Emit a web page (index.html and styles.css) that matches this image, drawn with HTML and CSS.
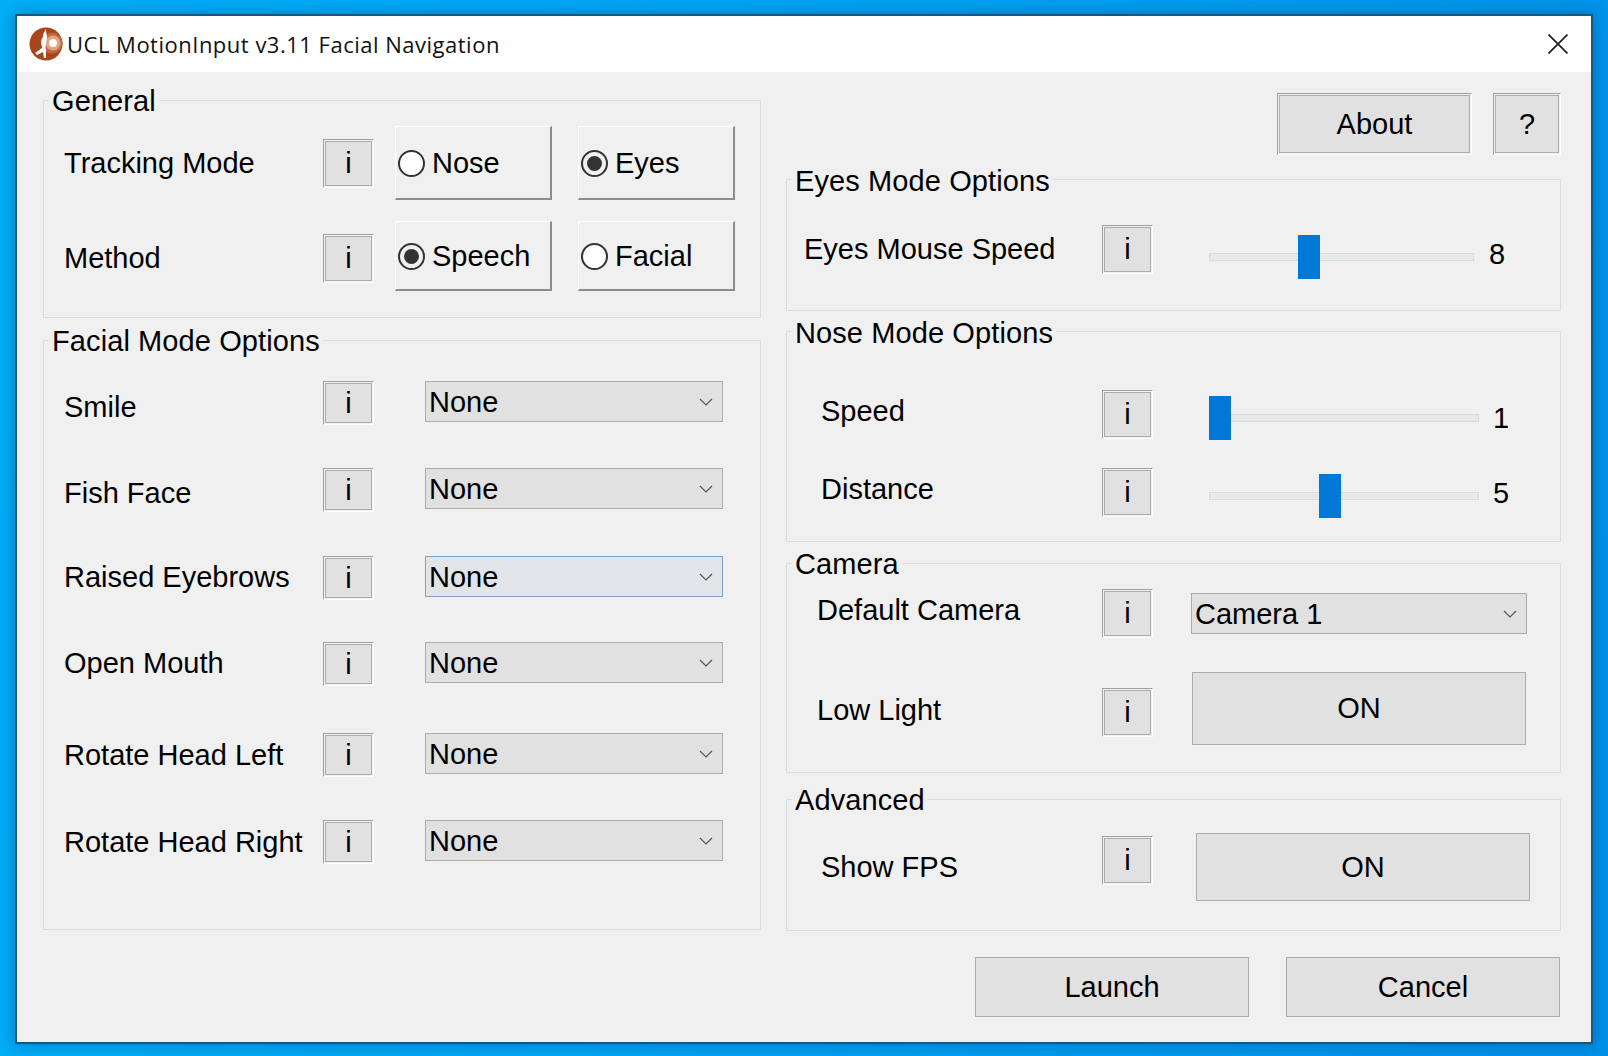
FILE: index.html
```html
<!DOCTYPE html>
<html lang="en">
<head>
    <meta charset="UTF-8">
    <title>UCL MotionInput v3.11 Facial Navigation</title>
    <link rel="stylesheet" href="styles.css">
</head>
<body>
    <div class="window">
        <div class="titlebar">
            <svg class="logo" width="34" height="34" viewBox="0 0 34 34">
                <circle cx="17" cy="17" r="16.5" fill="#a8451c"/>
                <circle cx="23" cy="16" r="10.5" fill="#c0683d"/>
                <circle cx="24" cy="16" r="7.5" fill="#e0a483"/>
                <circle cx="24" cy="16" r="4" fill="#fff"/>
                <path d="M17 2c-1 2-3 4-3 7 0 2-2 3-2 6 0 2 1 4 1 6l-7 5 2 2 6-3 1 6 2 0 0-8c-1-3 0-5 0-7s1-3 1-5-1-6-1-9z" fill="#fff"/>
            </svg>
            <span class="title">UCL MotionInput v3.11 Facial Navigation</span>
            <svg class="close" width="20" height="20" viewBox="0 0 20 20">
                <path d="M0.5 0.5L19.5 19.5M19.5 0.5L0.5 19.5" stroke="#1c1c1c" stroke-width="1.6" fill="none"/>
            </svg>
        </div>

        <div class="content">
            <div class="columns">
                <div class="left">
                    <fieldset class="group general">
                        <legend>General</legend>
                        <div class="general-grid">
                            <span class="label">Tracking Mode</span>
                            <button class="relief info info-tall">i</button>
                            <label class="tile">
                                <span class="radio"></span>Nose
                            </label>
                            <label class="tile">
                                <span class="radio checked"></span>Eyes
                            </label>

                            <span class="label shift-2">Method</span>
                            <button class="relief info info-tall shift-2">i</button>
                            <label class="tile">
                                <span class="radio checked"></span>Speech
                            </label>
                            <label class="tile">
                                <span class="radio"></span>Facial
                            </label>
                        </div>
                    </fieldset>

                    <fieldset class="group facial">
                        <legend>Facial Mode Options</legend>
                        <div class="facial-grid">
                            <span class="label shift-4">Smile</span>
                            <button class="relief info">i</button>
                            <div class="combo combo-left">None<svg class="chevron" width="14" height="8" viewBox="0 0 14 8"><path d="M1 1l6 6 6-6" stroke="#555" stroke-width="1.2" fill="none"/></svg></div>

                            <span class="label shift-3">Fish Face</span>
                            <button class="relief info">i</button>
                            <div class="combo combo-left">None<svg class="chevron" width="14" height="8" viewBox="0 0 14 8"><path d="M1 1l6 6 6-6" stroke="#555" stroke-width="1.2" fill="none"/></svg></div>

                            <span class="label lift-1">Raised Eyebrows</span>
                            <button class="relief info">i</button>
                            <div class="combo combo-left combo-hover">None<svg class="chevron" width="14" height="8" viewBox="0 0 14 8"><path d="M1 1l6 6 6-6" stroke="#555" stroke-width="1.2" fill="none"/></svg></div>

                            <span class="label lift-1">Open Mouth</span>
                            <button class="relief info">i</button>
                            <div class="combo combo-left">None<svg class="chevron" width="14" height="8" viewBox="0 0 14 8"><path d="M1 1l6 6 6-6" stroke="#555" stroke-width="1.2" fill="none"/></svg></div>

                            <span class="label">Rotate Head Left</span>
                            <button class="relief info">i</button>
                            <div class="combo combo-left">None<svg class="chevron" width="14" height="8" viewBox="0 0 14 8"><path d="M1 1l6 6 6-6" stroke="#555" stroke-width="1.2" fill="none"/></svg></div>

                            <span class="label">Rotate Head Right</span>
                            <button class="relief info">i</button>
                            <div class="combo combo-left">None<svg class="chevron" width="14" height="8" viewBox="0 0 14 8"><path d="M1 1l6 6 6-6" stroke="#555" stroke-width="1.2" fill="none"/></svg></div>
                        </div>
                    </fieldset>
                </div>

                <div class="right">
                    <div class="top-buttons">
                        <button class="relief about">About</button>
                        <button class="relief help">?</button>
                    </div>

                    <fieldset class="group eyes">
                        <legend>Eyes Mode Options</legend>
                        <div class="row">
                            <span class="label indent-17">Eyes Mouse Speed</span>
                            <button class="relief info info-tall">i</button>
                            <div class="slider slider-eyes">
                                <div class="track track-short"><div class="thumb" style="left: 88px"></div></div>
                                <span class="value value-eyes value-up">8</span>
                            </div>
                        </div>
                    </fieldset>

                    <fieldset class="group nose">
                        <legend>Nose Mode Options</legend>
                        <div class="rows">
                            <div class="row">
                                <span class="label indent-34 shift-up">Speed</span>
                                <button class="relief info info-tall">i</button>
                                <div class="slider">
                                    <div class="track"><div class="thumb" style="left: -1px"></div></div>
                                    <span class="value">1</span>
                                </div>
                            </div>
                            <div class="row">
                                <span class="label indent-34 shift-up">Distance</span>
                                <button class="relief info info-tall">i</button>
                                <div class="slider">
                                    <div class="track"><div class="thumb" style="left: 109px"></div></div>
                                    <span class="value value-up">5</span>
                                </div>
                            </div>
                        </div>
                    </fieldset>

                    <fieldset class="group camera">
                        <legend>Camera</legend>
                        <div class="rows rows-camera">
                            <div class="row">
                                <span class="label indent-30 shift-up">Default Camera</span>
                                <button class="relief info info-tall">i</button>
                                <div class="combo combo-camera">Camera 1<svg class="chevron" width="14" height="8" viewBox="0 0 14 8"><path d="M1 1l6 6 6-6" stroke="#555" stroke-width="1.2" fill="none"/></svg></div>
                            </div>
                            <div class="row">
                                <span class="label indent-30 shift-3-top">Low Light</span>
                                <button class="relief info info-tall shift-8">i</button>
                                <button class="flat toggle toggle-light">ON</button>
                            </div>
                        </div>
                    </fieldset>

                    <fieldset class="group advanced">
                        <legend>Advanced</legend>
                        <div class="row">
                            <span class="label indent-34">Show FPS</span>
                            <button class="relief info info-tall lift-13">i</button>
                            <button class="flat toggle toggle-fps">ON</button>
                        </div>
                    </fieldset>
                </div>
            </div>

            <div class="footer">
                <button class="flat action">Launch</button>
                <button class="flat action">Cancel</button>
            </div>
        </div>
    </div>
</body>
</html>
```

FILE: styles.css
```css
* { box-sizing: border-box; }
html, body { margin: 0; height: 100%; }
body {
    width: 1608px;
    height: 1056px;
    overflow: hidden;
    padding: 14px 15px;
    background: linear-gradient(100deg, #00aef8 0%, #00a4f4 45%, #0090e8 100%);
    font-family: "Liberation Sans", Arial, sans-serif;
    font-size: 29px;
    color: #000;
}

.window {
    width: 1578px;
    height: 1030px;
    border: 2px solid #1a5876;
    background: #f0f0f0;
    box-shadow: 0 0 14px rgba(0, 30, 70, 0.35);
}

.titlebar {
    display: flex;
    align-items: center;
    height: 56px;
    padding: 0 23px 0 12px;
    background: #fff;
}
.logo { flex: none; }
.title {
    margin-left: 4px;
    font-family: "Open Sans", sans-serif;
    font-size: 22px;
    letter-spacing: 0.5px;
    color: #111;
}
.close { margin-left: auto; }

.content { padding: 0 31px 0 26px; }
.columns { display: flex; gap: 25px; }
.left { width: 718px; flex: none; }
.right { width: 775px; flex: none; }

/* group boxes */
.group {
    margin: 0;
    padding: 0;
    min-width: 0;
    border: 1px solid #dcdcdc;
}
.group legend {
    margin-left: 5px;
    padding: 2px 3px 0;
    line-height: 32px;
    letter-spacing: 0.1px;
}
.eyes legend, .nose legend {
    padding-top: 4px;
    line-height: 30px;
}
.general { height: 235px; margin-top: 11px; }
.facial { height: 607px; margin-top: 5px; }
.eyes { height: 149px; margin-top: 7px; }
.nose { height: 228px; margin-top: 3px; }
.camera { height: 227px; margin-top: 4px; }
.advanced { height: 149px; margin-top: 9px; }

/* left column grids */
.general-grid {
    display: grid;
    grid-template-columns: 279px 51px 178px 183px;
    grid-template-rows: 74px 70px;
    row-gap: 21px;
    align-items: center;
    padding-top: 9px;
}
.facial-grid {
    display: grid;
    grid-template-columns: 279px 51px 51px 298px;
    grid-template-rows: 87px 88px 86px 91px 87px 44px;
    align-items: start;
    padding-top: 24px;
}
.facial-grid .combo { grid-column: 4; }
.facial-grid .label { line-height: 44px; }

/* right column rows */
.top-buttons {
    display: flex;
    justify-content: flex-end;
    gap: 21px;
    margin-top: 21px;
}
.rows { display: flex; flex-direction: column; gap: 26px; padding-top: 40px; }
.rows-camera { gap: 34px; padding-top: 9px; }
.row {
    display: grid;
    grid-template-columns: 315px 51px 1fr;
    align-items: center;
}
.eyes .row { padding-top: 24px; }
.advanced .row { padding-top: 17px; }

.label { padding-left: 20px; white-space: nowrap; }
.indent-17 { padding-left: 17px; }
.indent-30 { padding-left: 30px; }
.indent-34 { padding-left: 34px; }
.shift-2 { margin-top: 4px; }
.shift-3-top { margin-top: 3px; }
.shift-3 { padding-top: 3px; }
.shift-4 { padding-top: 4px; }
.shift-8 { margin-top: 8px; }
.shift-up { margin-bottom: 6px; }
.lift-1 { margin-top: -1px; }
.lift-13 { margin-bottom: 13px; }

/* buttons */
button {
    padding: 0;
    font: inherit;
    color: inherit;
}
.relief {
    border: 1px solid;
    border-color: #a0a0a0 #fff #fff #a0a0a0;
    background: #e1e1e1;
    box-shadow: inset 0 0 0 1px #f0f0f0, inset 0 0 0 2px #adadad;
}
.info { width: 51px; height: 44px; }
.info-tall { height: 49px; }
.about { width: 195px; height: 62px; padding-top: 1px; }
.help { width: 68px; height: 62px; padding-top: 1px; }
.flat { border: 1px solid #adadad; background: #e1e1e1; }
.toggle { width: 334px; }
.toggle-light { height: 73px; margin-left: 39px; }
.toggle-fps { height: 68px; margin-left: 43px; }
.footer {
    display: flex;
    justify-content: flex-end;
    gap: 37px;
    margin-top: 26px;
}
.action { width: 274px; height: 60px; }

/* radio tiles */
.tile {
    display: flex;
    align-items: center;
    justify-self: end;
    width: 157px;
    height: 100%;
    padding: 2px 0 0 2px;
    border-top: 1px solid #fff;
    border-left: 1px solid #fff;
    border-right: 2px solid #8c8c8c;
    border-bottom: 2px solid #8c8c8c;
}
.radio {
    flex: none;
    position: relative;
    width: 27px;
    height: 27px;
    margin-right: 7px;
    border: 2px solid #333;
    border-radius: 50%;
    background: #fff;
}
.radio.checked { background: #f0f0f0; }
.radio.checked::after {
    content: "";
    position: absolute;
    top: 4px;
    left: 4px;
    width: 15px;
    height: 15px;
    border-radius: 50%;
    background: #333;
}

/* combos */
.combo {
    display: flex;
    align-items: center;
    justify-content: space-between;
    height: 41px;
    padding: 2px 9px 0 3px;
    border: 1px solid #adadad;
    background: #e1e1e1;
}
.combo .chevron { margin-top: -2px; }
.combo-hover { border-color: #7ea2c4; background: #e1e5e8; }
.combo-camera { width: 336px; margin-left: 38px; }
.chevron { flex: none; }

/* sliders */
.slider {
    display: flex;
    align-items: center;
    height: 44px;
    margin-left: 56px;
    margin-top: 8px;
}
.slider-eyes { margin-top: 15px; }
.track {
    position: relative;
    width: 270px;
    height: 8px;
    border: 1px solid #d8dcdc;
    background: #e7eaea;
}
.track-short { width: 265px; }
.thumb {
    position: absolute;
    top: -19px;
    width: 22px;
    height: 44px;
    background: #0078d7;
}
.value { width: 44px; text-align: center; }
.value-eyes { margin-left: 1px; }
.value-up { margin-bottom: 6px; }
```
